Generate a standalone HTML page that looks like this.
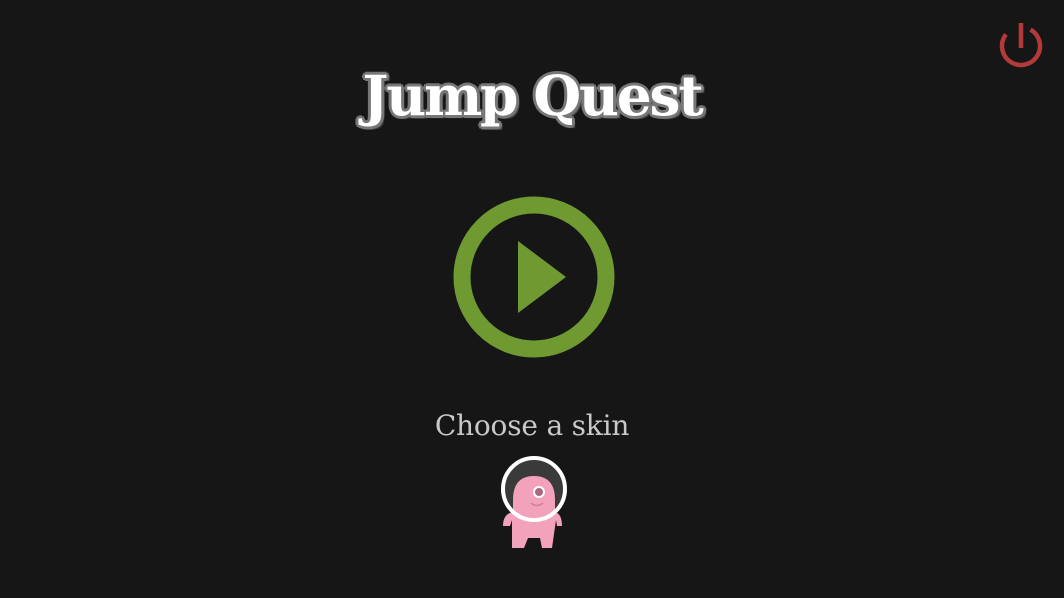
<!DOCTYPE html>
<html><head><style>
html,body{margin:0;padding:0;background:#161616;width:1064px;height:598px;overflow:hidden}
.t{position:absolute;left:0;width:1064px;text-align:center;top:63px;font:bold 55px "DejaVu Serif",serif;color:#fff;letter-spacing:-2.2px;
text-shadow:2px 2px 0 #777,-2px -2px 0 #777,2px -2px 0 #777,-2px 2px 0 #777,3px 0 0 #777,-3px 0 0 #777,0 3px 0 #777,0 -3px 0 #777,3px 3px 1px #555}
.c{position:absolute;left:0;width:1064px;text-align:center;top:409px;font:28px "DejaVu Serif",serif;color:#c8c8c8;letter-spacing:-0.2px}
svg{position:absolute;left:0;top:0}
</style></head><body>
<div class="t">Jump Quest</div>
<div class="c">Choose a skin</div>
<svg width="1064" height="598">
<circle cx="1021" cy="46" r="19" fill="none" stroke="#b23a3a" stroke-width="4.5" stroke-dasharray="92 28" transform="rotate(-60 1021 46)"/>
<line x1="1021" y1="23" x2="1021" y2="48" stroke="#b23a3a" stroke-width="4.5"/>
<circle cx="534" cy="277" r="72" fill="none" stroke="#6f9a32" stroke-width="17"/>
<polygon points="518,241 566,277 518,313" fill="#6f9a32"/>
<circle cx="534" cy="489" r="31" fill="#3a3a3a"/>
<path d="M513 500 Q513 476 534 476 Q555 476 555 500 L555 512 Q562 514 562 526 L557 526 L556 520 L552 548 L542 548 L540 538 L528 538 L524 548 L512 548 L512 520 L510 526 L503 526 Q503 514 513 512 Z" fill="#f2a3bb"/>
<circle cx="539" cy="492" r="6" fill="#fff"/><circle cx="539" cy="492" r="4" fill="#a86a7e"/>
<path d="M531 503 Q537 508 543 503" stroke="#d07f97" stroke-width="1.5" fill="none"/>
<circle cx="534" cy="489" r="31" fill="none" stroke="#fff" stroke-width="4"/>
</svg>
</body></html>
